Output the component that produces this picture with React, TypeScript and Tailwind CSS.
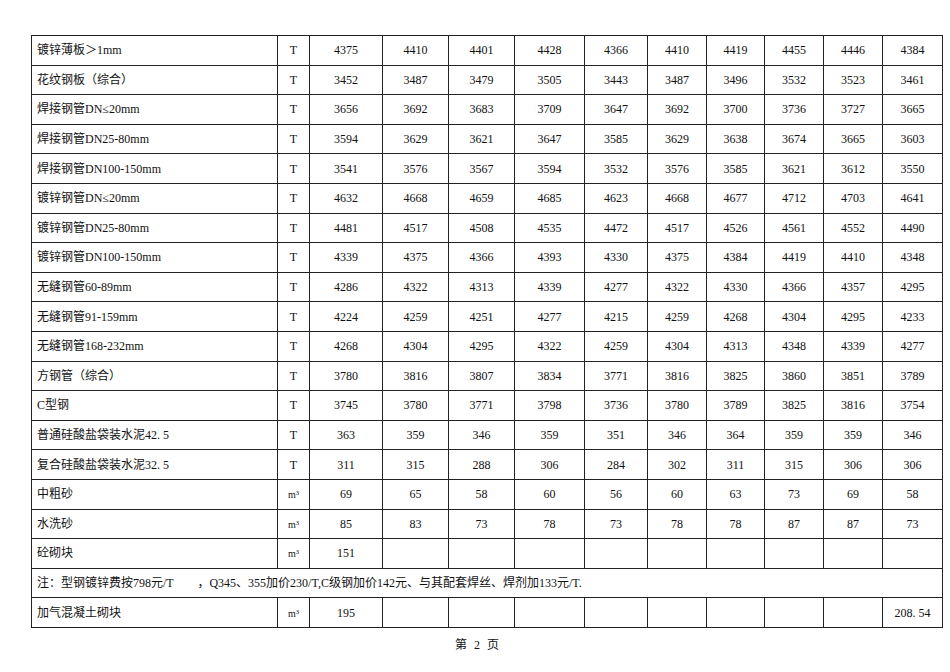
const widths = [
  'w-[246px]',
  'w-[32px]',
  'w-[73px]',
  'w-[66px]',
  'w-[66px]',
  'w-[70px]',
  'w-[63px]',
  'w-[59px]',
  'w-[58px]',
  'w-[59px]',
  'w-[59px]',
  'w-[60px]',
];

type Row = { name: string; unit: string; prices: string[] };

const rows: Row[] = [
  { name: '镀锌薄板＞1mm', unit: 'T', prices: ['4375', '4410', '4401', '4428', '4366', '4410', '4419', '4455', '4446', '4384'] },
  { name: '花纹钢板（综合）', unit: 'T', prices: ['3452', '3487', '3479', '3505', '3443', '3487', '3496', '3532', '3523', '3461'] },
  { name: '焊接钢管DN≤20mm', unit: 'T', prices: ['3656', '3692', '3683', '3709', '3647', '3692', '3700', '3736', '3727', '3665'] },
  { name: '焊接钢管DN25-80mm', unit: 'T', prices: ['3594', '3629', '3621', '3647', '3585', '3629', '3638', '3674', '3665', '3603'] },
  { name: '焊接钢管DN100-150mm', unit: 'T', prices: ['3541', '3576', '3567', '3594', '3532', '3576', '3585', '3621', '3612', '3550'] },
  { name: '镀锌钢管DN≤20mm', unit: 'T', prices: ['4632', '4668', '4659', '4685', '4623', '4668', '4677', '4712', '4703', '4641'] },
  { name: '镀锌钢管DN25-80mm', unit: 'T', prices: ['4481', '4517', '4508', '4535', '4472', '4517', '4526', '4561', '4552', '4490'] },
  { name: '镀锌钢管DN100-150mm', unit: 'T', prices: ['4339', '4375', '4366', '4393', '4330', '4375', '4384', '4419', '4410', '4348'] },
  { name: '无缝钢管60-89mm', unit: 'T', prices: ['4286', '4322', '4313', '4339', '4277', '4322', '4330', '4366', '4357', '4295'] },
  { name: '无缝钢管91-159mm', unit: 'T', prices: ['4224', '4259', '4251', '4277', '4215', '4259', '4268', '4304', '4295', '4233'] },
  { name: '无缝钢管168-232mm', unit: 'T', prices: ['4268', '4304', '4295', '4322', '4259', '4304', '4313', '4348', '4339', '4277'] },
  { name: '方钢管（综合）', unit: 'T', prices: ['3780', '3816', '3807', '3834', '3771', '3816', '3825', '3860', '3851', '3789'] },
  { name: 'C型钢', unit: 'T', prices: ['3745', '3780', '3771', '3798', '3736', '3780', '3789', '3825', '3816', '3754'] },
  { name: '普通硅酸盐袋装水泥42. 5', unit: 'T', prices: ['363', '359', '346', '359', '351', '346', '364', '359', '359', '346'] },
  { name: '复合硅酸盐袋装水泥32. 5', unit: 'T', prices: ['311', '315', '288', '306', '284', '302', '311', '315', '306', '306'] },
  { name: '中粗砂', unit: 'm³', prices: ['69', '65', '58', '60', '56', '60', '63', '73', '69', '58'] },
  { name: '水洗砂', unit: 'm³', prices: ['85', '83', '73', '78', '73', '78', '78', '87', '87', '73'] },
  { name: '砼砌块', unit: 'm³', prices: ['151', '', '', '', '', '', '', '', '', ''] },
];

const lastRow: Row = {
  name: '加气混凝土砌块',
  unit: 'm³',
  prices: ['195', '', '', '', '', '', '', '', '', '208. 54'],
};

const cell = 'border border-[#222] h-[29.6px] p-0 align-middle';

function PriceRow({ row }: { row: Row }) {
  return (
    <tr>
      <td className={`${cell} text-left pl-[5px] whitespace-pre`}>{row.name}</td>
      <td className={`${cell} text-center`}>
        {row.unit === 'T' ? 'T' : <span className="text-[10px]">m³</span>}
      </td>
      {row.prices.map((p, i) => (
        <td key={i} className={`${cell} text-center whitespace-pre`}>
          {p}
        </td>
      ))}
    </tr>
  );
}

export default function App() {
  return (
    <div className="w-[950px] h-[672px] bg-white text-[#111] text-[12px] leading-none font-['Liberation_Serif','Noto_Sans_CJK_SC',serif] overflow-hidden">
      <div className="pt-[35px] pl-[31px]">
        <table className="table-fixed border-collapse w-[911px]">
          <colgroup>
            {widths.map((w, i) => (
              <col key={i} className={w} />
            ))}
          </colgroup>
          <tbody>
            {rows.map((r) => (
              <PriceRow key={r.name} row={r} />
            ))}
            <tr>
              <td colSpan={12} className={`${cell} text-left pl-[5px] whitespace-pre`}>
                {'注：型钢镀锌费按798元/T　　，Q345、355加价230/T,C级钢加价142元、与其配套焊丝、焊剂加133元/T.'}
              </td>
            </tr>
            <PriceRow row={lastRow} />
          </tbody>
        </table>
      </div>
      <div className="mt-[11px] flex justify-center gap-[7px] pl-[4px]">
        <span>第</span>
        <span>2</span>
        <span>页</span>
      </div>
    </div>
  );
}
